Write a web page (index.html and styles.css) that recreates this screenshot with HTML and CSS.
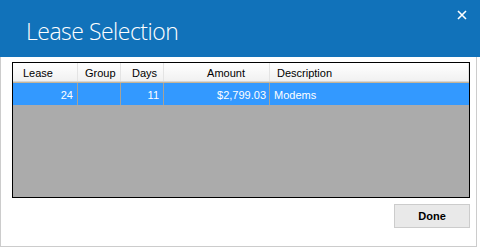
FILE: index.html
```html
<!DOCTYPE html>
<html>
<head>
<meta charset="utf-8">
<link rel="stylesheet" href="styles.css">
</head>
<body>
<div class="titlebar">
  <h1 class="title">Lease Selection</h1>
  <button class="close" aria-label="Close">
    <svg width="10" height="10" viewBox="0 0 10 10"><path d="M1 1L9 9M9 1L1 9" stroke="#fff" stroke-width="1.6" fill="none"/></svg>
  </button>
</div>
<div class="panel">
  <div class="grid">
    <div class="row head">
      <div class="cell c-lease">Lease</div>
      <div class="cell c-group">Group</div>
      <div class="cell c-days">Days</div>
      <div class="cell c-amount">Amount</div>
      <div class="cell c-desc">Description</div>
    </div>
    <div class="row data selected">
      <div class="cell num">24</div>
      <div class="cell"></div>
      <div class="cell num">11</div>
      <div class="cell num amt">$2,799.03</div>
      <div class="cell txt">Modems</div>
    </div>
  </div>
  <div class="footer">
    <button class="done">Done</button>
  </div>
</div>
</body>
</html>
```

FILE: styles.css
```css
html, body {
  margin: 0;
  padding: 0;
  background: #ffffff;
}
body {
  width: 480px;
  height: 248px;
  overflow: hidden;
  font-family: "Liberation Sans", Arial, sans-serif;
}
.titlebar {
  width: 480px;
  height: 57px;
  background: #1172ba;
  display: flex;
  align-items: flex-start;
  justify-content: space-between;
  box-sizing: border-box;
  padding-left: 26px;
}
.title {
  margin: 0;
  padding-top: 16px;
  font-family: "Open Sans", "Noto Sans", sans-serif;
  font-weight: 300;
  font-size: 23px;
  line-height: 31px;
  color: #ffffff;
  letter-spacing: -0.5px;
}
.close {
  margin: 10px 13px 0 0;
  padding: 0;
  border: 0;
  background: transparent;
  width: 10px;
  height: 10px;
  display: flex;
}
.panel {
  width: 477px;
  height: 190px;
  box-sizing: border-box;
  border: 1px solid #cccccc;
  border-top: 0;
  padding: 5px 6px 0 11px;
  display: flex;
  flex-direction: column;
}
.grid {
  width: 458px;
  height: 136px;
  box-sizing: border-box;
  border: 1px solid #000000;
  background: #ababab;
  font-size: 11px;
}
.row {
  display: grid;
  grid-template-columns: 65px 43px 43px 106px 1fr;
}
.head {
  height: 19px;
  box-sizing: border-box;
  background: linear-gradient(#ffffff, #f1f1f1);
  border-bottom: 1px solid #d5d5d5;
  color: #000000;
}
.head .cell {
  border-right: 1px solid #e4e4e4;
  line-height: 18px;
  padding-top: 1px;
}
.c-lease { padding-left: 10px; }
.c-group { padding-left: 7px; }
.c-days { text-align: right; padding-right: 6px; }
.c-amount { text-align: right; padding-right: 24px; }
.c-desc { padding-left: 7px; }
.cell {
  box-sizing: border-box;
  white-space: nowrap;
  overflow: hidden;
}
.data {
  height: 23px;
  box-sizing: border-box;
  border-top: 1px solid #c6b597;
}
.selected {
  background: #3399ff;
  color: #ffffff;
}
.data .cell {
  border-right: 1px solid #a8a296;
  line-height: 22px;
  padding-top: 1px;
}
.data .cell:last-child {
  border-right: 0;
}
.num {
  text-align: right;
  padding-right: 4px;
}
.amt { padding-right: 3px; }
.txt { padding-left: 4px; }
.footer {
  display: flex;
  justify-content: flex-end;
  padding-top: 6px;
}
.done {
  width: 76px;
  height: 24px;
  margin: 0;
  padding: 0;
  box-sizing: border-box;
  border: 1px solid #cccccc;
  background: #e9e9e9;
  font-family: "Liberation Sans", Arial, sans-serif;
  font-weight: bold;
  font-size: 11px;
  color: #000000;
}
```
